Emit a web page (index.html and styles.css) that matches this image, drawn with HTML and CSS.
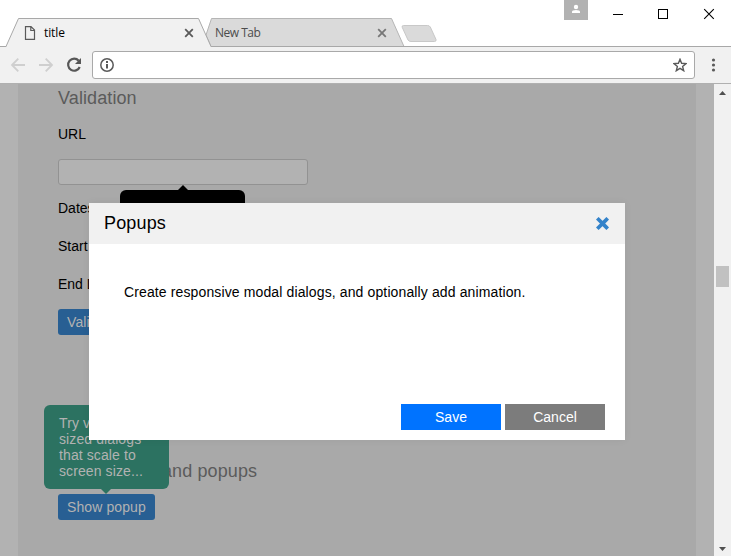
FILE: index.html
```html
<!DOCTYPE html>
<html lang="en">
<head>
<meta charset="utf-8">
<title>title</title>
<link rel="stylesheet" href="styles.css">
</head>
<body>
<div class="window">
  <header class="tabstrip">
    <svg class="tab-shapes" width="731" height="47" viewBox="0 0 731 47">
      <path d="M206 35 L211.500 18.500 H391.500 L404 46.500 H211 Z" fill="#dadada" stroke="#b5b5b5"/>
      <path d="M0 46.500 H731" stroke="#a8a8a8"/>
      <path d="M6 47 L18.500 18.500 H198.500 L211 47 Z" fill="#f1f1f1"/>
      <path d="M0 46.500 H6 L18.500 18.500 H198.500 L211 46.500" fill="none" stroke="#a8a8a8"/>
      <path d="M403.500 25.500 H427.500 Q429.500 25.500 430.300 27 L436 39.500 Q436.500 41.500 434.500 41.500 H411 Q409 41.500 408 40 L402.300 27.500 Q401.500 25.500 403.500 25.500 Z" fill="#dadada" stroke="#c8c8c8"/>
    </svg>
    <div class="tab tab-active">
      <svg width="12" height="14" viewBox="0 0 12 14" fill="none" stroke="#5a5a5a" stroke-width="1.200"><path d="M1.500 .600 H7 L10.500 4.100 V13.400 H1.500 Z M6.800 1 V4.500 H10.200"/></svg>
      <span class="tab-name">title</span>
      <svg class="tab-x" width="10" height="10" viewBox="0 0 10 10"><path d="M1.200 1.200 L8.800 8.800 M8.800 1.200 L1.200 8.800" stroke="#5a5a5a" stroke-width="1.800"/></svg>
    </div>
    <div class="tab tab-idle">
      <span class="tab-name">New Tab</span>
      <svg class="tab-x" width="10" height="10" viewBox="0 0 10 10"><path d="M1.200 1.200 L8.800 8.800 M8.800 1.200 L1.200 8.800" stroke="#777" stroke-width="1.800"/></svg>
    </div>
    <svg class="controls" width="167" height="28" viewBox="0 0 167 28">
      <path d="M0 0 H24 V20 H0 Z" fill="#b2b2b2"/>
      <circle cx="12" cy="7" r="2.200" fill="#fff"/>
      <path d="M8 13 V11.700 Q8 10 12 10 T16 11.700 V13 Z" fill="#fff"/>
      <path d="M49 14.500 H59" stroke="#000"/>
      <rect x="94.500" y="9.500" width="9" height="9" fill="none" stroke="#000"/>
      <path d="M140.200 9.200 L149.800 18.800 M149.800 9.200 L140.200 18.800" stroke="#000" stroke-width="1.100"/>
    </svg>
  </header>

  <nav class="toolbar">
    <svg class="nav-icons" width="92" height="36" viewBox="0 0 92 36" fill="none">
      <path d="M25 18 H12.500 M18.300 11.700 L12 18 L18.300 24.300 M39 18 H51.500 M45.700 11.700 L52 18 L45.700 24.300" stroke="#cfcfcf" stroke-width="1.800"/>
      <path d="M78.700 13.800 A6 6 0 1 0 79.700 20" stroke="#575757" stroke-width="2.200"/>
      <path d="M81 11 V17 H75 Z" fill="#575757"/>
    </svg>
    <div class="address">
      <svg width="14" height="14" viewBox="0 0 14 14" fill="none" stroke="#5a5a5a"><circle cx="7" cy="7" r="6.200" stroke-width="1.500"/><path d="M7 6 V10.500 M7 3 V5" stroke-width="2"/></svg>
      <svg width="14" height="14" viewBox="0 0 14 14"><path d="M7 1.300 L8.600 5.300 L13 5.600 L9.600 8.400 L10.700 12.700 L7 10.300 L3.300 12.700 L4.400 8.400 L1 5.600 L5.400 5.300 Z" fill="none" stroke="#5a5a5a" stroke-width="1.400"/></svg>
    </div>
    <svg class="menu" width="5" height="14" viewBox="0 0 5 14" fill="#5a5a5a"><circle cx="2.500" cy="2" r="1.600"/><circle cx="2.500" cy="7" r="1.600"/><circle cx="2.500" cy="12" r="1.600"/></svg>
  </nav>

  <div class="viewport">
    <main class="page">
      <section class="panel">
        <h2 class="heading">Validation</h2>
        <label class="label-url">URL</label>
        <div class="input"></div>
        <div class="row">Dates</div>
        <div class="row">Start Date</div>
        <div class="row">End Date</div>
        <div class="button button-validate">Validate</div>
        <h2 class="heading heading-popups">and popups</h2>
        <div class="button">Show popup</div>
      </section>
      <div class="tip tip-dark"></div>
      <div class="tip tip-green">Try various<br>sized dialogs<br>that scale to<br>screen size...</div>

      <div class="dialog">
        <div class="dialog-header">
          <span>Popups</span>
          <svg width="13" height="13" viewBox="0 0 13 13"><path d="M2.600 2.600 L10.400 10.400 M10.400 2.600 L2.600 10.400" stroke="#3483ca" stroke-width="3.700" stroke-linecap="square"/></svg>
        </div>
        <div class="dialog-body">Create responsive modal dialogs, and optionally add animation.</div>
        <div class="dialog-actions">
          <div class="action save">Save</div>
          <div class="action cancel">Cancel</div>
        </div>
      </div>
    </main>
    <div class="scrollbar">
      <svg width="7" height="4" viewBox="0 0 7 4"><path d="M0 4 L3.500 0 L7 4 Z" fill="#505050"/></svg>
      <div class="thumb"></div>
      <svg class="down" width="7" height="4" viewBox="0 0 7 4"><path d="M0 0 L3.500 4 L7 0 Z" fill="#505050"/></svg>
    </div>
  </div>
</div>
</body>
</html>
```

FILE: styles.css
```css
* { box-sizing: border-box; }
body { margin: 0; overflow: hidden; font: 14px/16px "Liberation Sans", Arial, sans-serif; color: #000; }
.window { width: 731px; height: 556px; display: flex; flex-direction: column; background: #fff; }

.tabstrip { position: relative; height: 47px; flex: none; display: flex; padding-top: 19px; }
.tab-shapes { position: absolute; left: 0; top: 0; }
.tab { position: relative; display: flex; align-items: center; height: 28px; font: 12px/16px "Open Sans", "Noto Sans", sans-serif; }
.tab-active { width: 194px; margin-left: 24px; }
.tab-active .tab-name { margin-left: 8px; letter-spacing: -.1px; }
.tab-active .tab-x { margin: 0 24px 0 auto; }
.tab-idle { width: 172px; margin-left: -3px; color: #4c4c4c; }
.tab-idle .tab-name { letter-spacing: -.5px; }
.tab-idle .tab-x { margin: 0 0 0 auto; }
.controls { position: absolute; right: 0; top: 0; }

.toolbar { height: 37px; flex: none; display: flex; align-items: flex-start; background: #f1f1f1; border-bottom: 1px solid #b0b0b0; }
.nav-icons { flex: none; }
.address { width: 603px; height: 28px; margin-top: 4px; padding: 0 7px; display: flex; align-items: center; justify-content: space-between; background: #fff; border: 1px solid #a9a9a9; border-radius: 3px; }
.menu { margin: 11px 0 0 16px; }

.viewport { flex: 1; display: flex; min-height: 0; }
.page { position: relative; width: 714px; background: #b2b2b2; overflow: hidden; }
.panel { height: 100%; margin: 0 18px; padding: 4px 40px 0; display: flex; flex-direction: column; align-items: flex-start; background: #a9a9a9; }
.heading { margin: 0; font-size: 18px; font-weight: 400; line-height: 20px; letter-spacing: .1px; color: #5b5b5b; }
.label-url { margin-top: 18px; }
.input { width: 250px; height: 26px; margin: 17px 0 4px; background: #b2b2b2; border: 1px solid #929292; border-radius: 3px; }
.row { height: 38px; line-height: 38px; }
.button { height: 26px; margin-top: 6px; padding: 0 9px; line-height: 26px; letter-spacing: .1px; background: #285f93; color: #b2b2b2; border-radius: 3px; }
.heading-popups { margin: 126px 0 7px 104px; }

.tip { position: absolute; border-radius: 6px; }
.tip::after { content: ""; position: absolute; border: 5px solid transparent; }
.tip-dark { left: 120px; top: 106px; width: 125px; height: 40px; background: #000; }
.tip-dark::after { left: 58px; top: -10px; border-bottom-color: #000; }
.tip-green { left: 44px; top: 321px; width: 125px; height: 84px; padding: 10px 15px; letter-spacing: .1px; background: #2c7261; color: #b2b2b2; }
.tip-green::after { left: 57px; top: 84px; border-top-color: #2c7261; }

.dialog { position: absolute; left: 89px; top: 119px; width: 536px; height: 237px; display: flex; flex-direction: column; background: #fff; box-shadow: 0 0 8px rgba(0, 0, 0, .06); }
.dialog-header { height: 41px; padding: 0 16px 1px 15px; display: flex; align-items: center; justify-content: space-between; background: #f1f1f1; font-size: 18px; letter-spacing: .15px; }
.dialog-body { padding: 40px 35px; flex: 1; letter-spacing: .125px; }
.dialog-actions { display: flex; justify-content: flex-end; gap: 4px; padding: 0 20px 10px; }
.action { width: 100px; height: 26px; line-height: 26px; text-align: center; color: #fff; }
.save { background: #0073ff; }
.cancel { background: #7c7c7c; }

.scrollbar { width: 17px; display: flex; flex-direction: column; align-items: center; padding: 7px 0 5px; background: #f1f1f1; }
.thumb { width: 13px; height: 21px; margin-top: 171px; background: #c1c1c1; }
.down { margin-top: auto; }
```
